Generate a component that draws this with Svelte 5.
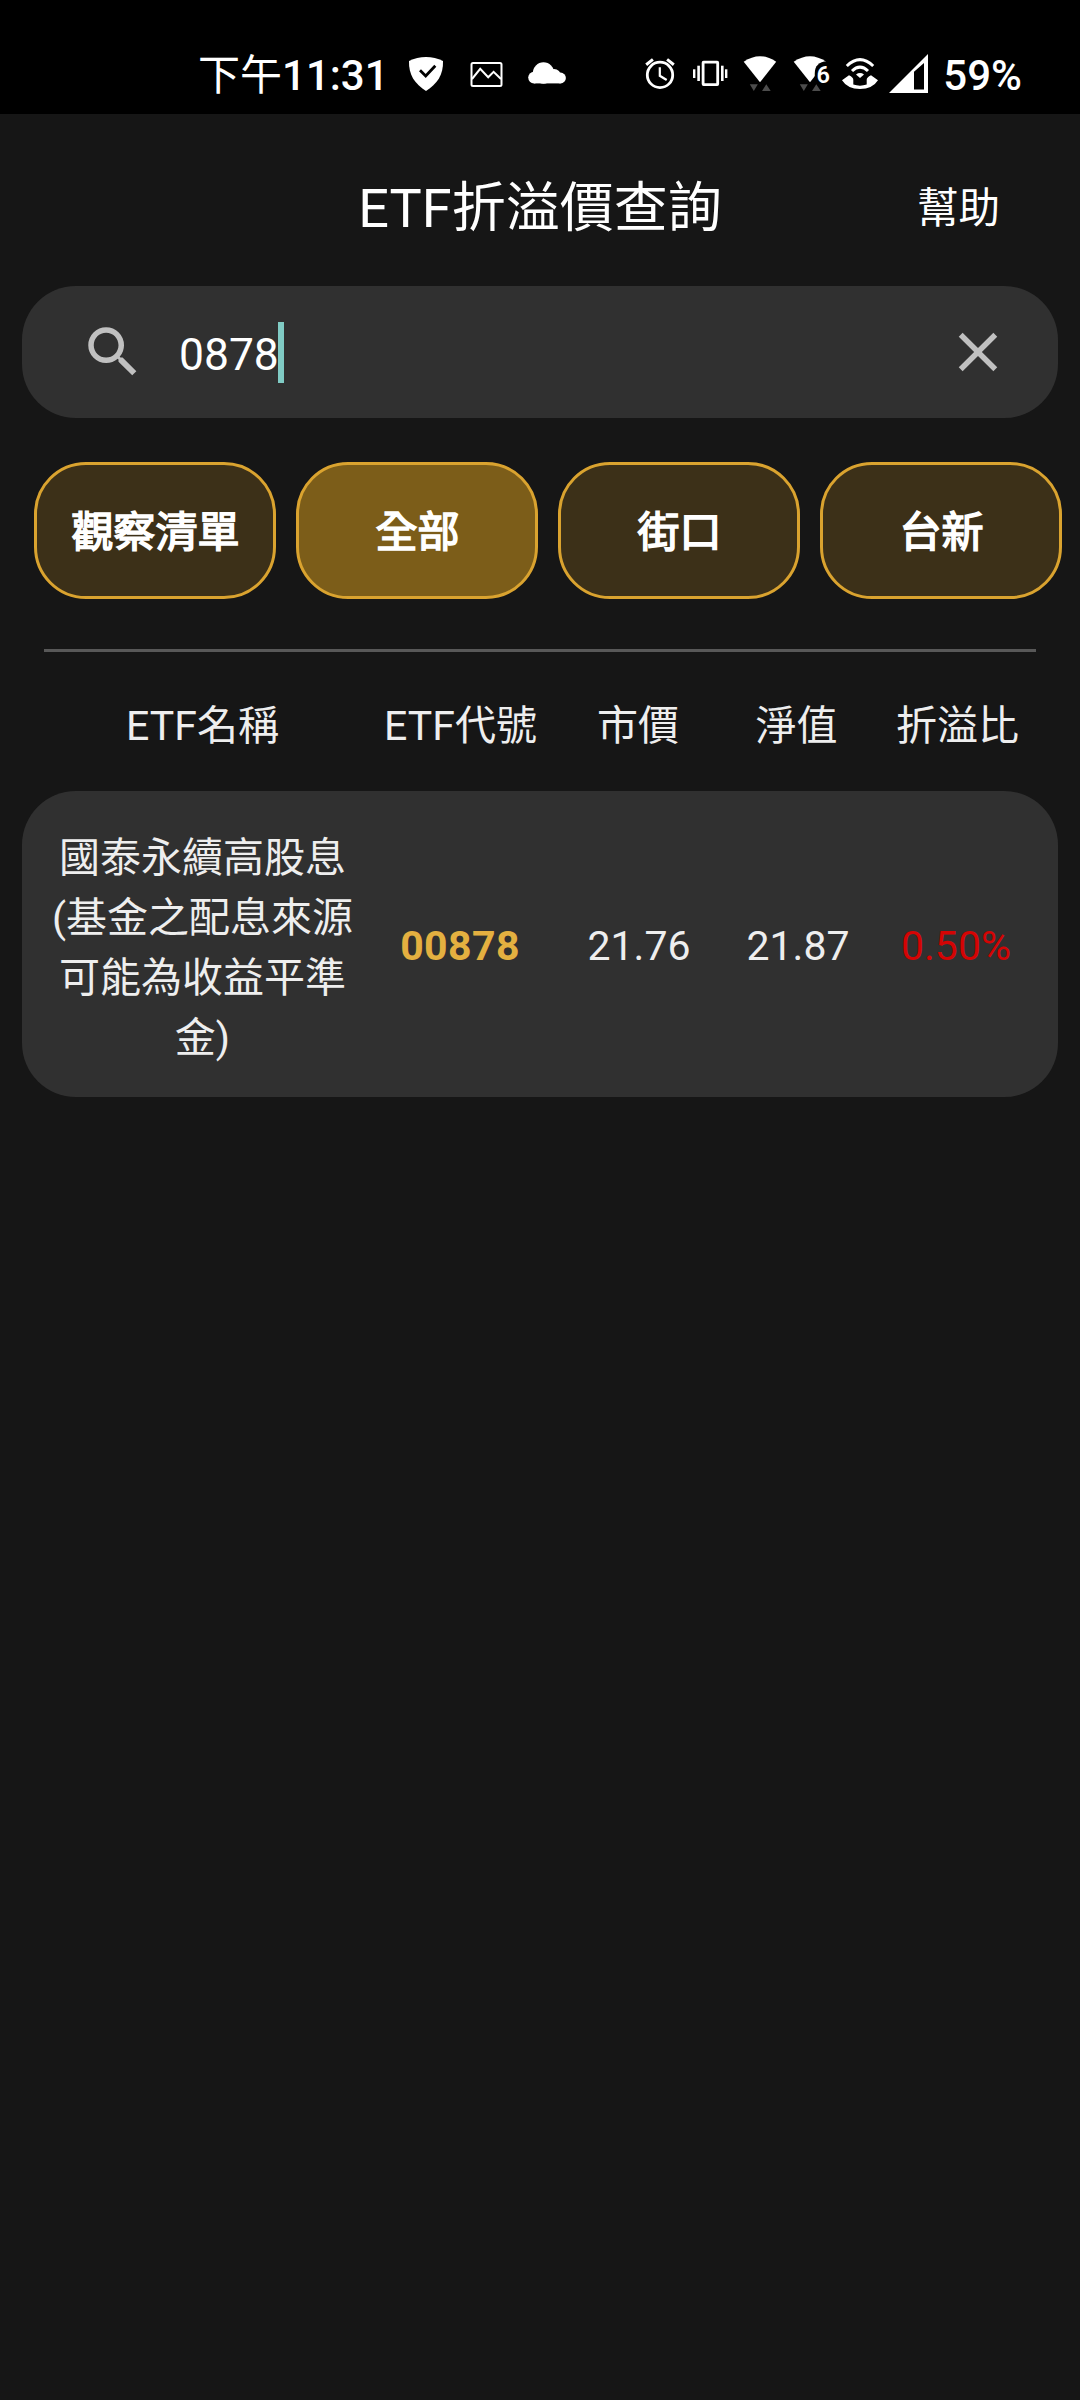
<script>
  let query  = $state('0878');
  let active = $state('全部');

  const filters = ['觀察清單', '全部', '街口', '台新'];
  const columns = ['ETF名稱', 'ETF代號', '市價', '淨值', '折溢比'];

  const etfs = [
    {
      name: '國泰永續高股息(基金之配息來源可能為收益平準金)',
      code: '00878',
      price: '21.76',
      nav: '21.87',
      ratio: '0.50%',
    },
  ];

  const results = $derived(etfs.filter((etf) => etf.code.includes(query)));
</script>

<div class="screen">
  <div class="status-bar">
    <div class="status-group left">
      <span class="clock"><span class="period">下午</span>11:31</span>
      <div class="status-icons notifications">
        <!-- shield -->
        <svg viewBox="0 0 40 40">
          <path d="M3 8Q11 4 20 4T37 8C37.5 22 31 31 20 38C9 31 2.5 22 3 8Z" fill="#fff" />
          <path d="M14 17.3L19.7 23L29.3 12.7" fill="none" stroke="#000" stroke-width="2.8" />
        </svg>
        <!-- picture -->
        <svg viewBox="0 0 40 40" fill="none" stroke="#fff" stroke-width="2">
          <rect x="5.5" y="10" width="30" height="23" rx="1.5" />
          <path d="M6 26L14.2 15.8L22.2 24.3L27.6 18.8L35 26" />
        </svg>
        <!-- cloud -->
        <svg viewBox="0 0 40 40" fill="#fff">
          <circle cx="16.5" cy="20" r="10.7" />
          <circle cx="7" cy="24.6" r="5.8" />
          <circle cx="27" cy="23" r="7" />
          <circle cx="33.5" cy="25" r="5.4" />
          <rect x="7" y="22" width="26.5" height="8.4" />
        </svg>
      </div>
    </div>

    <div class="status-group">
      <div class="status-icons">
        <!-- alarm -->
        <svg viewBox="0 0 40 40" fill="none" stroke="#fff">
          <circle cx="20" cy="21.9" r="12.7" stroke-width="2.8" />
          <path d="M19.8 14.3V22.8L26.7 27" stroke-width="2.2" />
          <path d="M6.2 11.7L12.9 6.4M27.1 6.4L33.8 11.7" stroke-width="3" />
        </svg>
        <!-- vibrate -->
        <svg viewBox="0 0 40 40" fill="#fff">
          <rect x="13.1" y="9.2" width="14.6" height="22.4" fill="none" stroke="#fff" stroke-width="2.8" rx="0.5" />
          <rect x="7.3" y="12.7" width="2.6" height="15.3" />
          <rect x="3" y="16.3" width="2.4" height="8.7" />
          <rect x="31" y="12.7" width="2.6" height="15.3" />
          <rect x="35" y="16.3" width="2.4" height="8.7" />
        </svg>
        <!-- wifi -->
        <svg viewBox="0 0 40 40">
          <path d="M3.7 8.7Q20 -2.4 36.2 8.7L20 29.3Z" fill="#fff" />
          <path d="M9.8 31.3H17.8L13.8 38ZM22 38H30.7L26.3 31.3Z" fill="#4c4c4c" />
        </svg>
        <!-- wifi 6 -->
        <svg viewBox="0 0 40 40">
          <path d="M3.7 8.7Q20 -2.4 36.2 8.7L20 29.3Z" fill="#fff" />
          <path d="M9.8 31.3H17.8L13.8 38ZM22 38H30.7L26.3 31.3Z" fill="#4c4c4c" />
          <path d="M24.8 24V20C24.8 13 29 8.5 37 8.2V24Z" fill="#000" />
          <text x="26.6" y="29.7" class="wifi-gen">6</text>
        </svg>
        <!-- wifi calling -->
        <svg viewBox="0 0 40 40">
          <path d="M6.8 13Q20 0.4 33.2 13M12 18Q20 10.4 28 18" fill="none" stroke="#fff" stroke-width="3" />
          <path d="M16 21.4Q20 18.6 24 21.4L20 25Z" fill="#fff" />
          <path d="M2 27.3L9 22.3Q13.3 24.5 13.3 26.8V31.5Q20 33.8 26.7 31.5V26.8Q26.7 24.5 31 22.3L38 27.3Q32.5 36 20 36T2 27.3Z" fill="#fff" />
        </svg>
        <!-- signal -->
        <svg viewBox="0 0 40 40">
          <path d="M-1 40L38 1V40ZM24 18.7V36.5H34V10Z" fill="#fff" fill-rule="evenodd" />
        </svg>
      </div>
      <span class="battery">59%</span>
    </div>
  </div>

  <header class="header">
    <span></span>
    <h1 class="title">ETF折溢價查詢</h1>
    <button class="help">幫助</button>
  </header>

  <div class="search">
    <svg class="search-icon" viewBox="0 0 24 24">
      <path d="M15.5 14h-.79l-.28-.27A6.47 6.47 0 0 0 16 9.5 6.5 6.5 0 1 0 9.5 16c1.61 0 3.09-.59 4.23-1.57l.27.28v.79l5 4.99L20.49 19l-4.99-5zm-6 0C7.01 14 5 11.99 5 9.5S7.01 5 9.5 5 14 7.01 14 9.5 11.99 14 9.5 14z" />
    </svg>
    <span class="query">{query}</span>
    <span class="caret"></span>
    <button class="clear" aria-label="清除" onclick={() => (query = '')}>
      <svg viewBox="0 0 24 24">
        <path d="M19 6.41L17.59 5 12 10.59 6.41 5 5 6.41 10.59 12 5 17.59 6.41 19 12 13.41 17.59 19 19 17.59 13.41 12z" />
      </svg>
    </button>
  </div>

  <div class="filters">
    {#each filters as filter}
      <button class="chip" class:active={filter === active} onclick={() => (active = filter)}>{filter}</button>
    {/each}
  </div>

  <div class="columns">
    {#each columns as column}
      <span>{column}</span>
    {/each}
  </div>

  {#each results as etf}
    <div class="card">
      <span class="name">{etf.name}</span>
      <span class="code">{etf.code}</span>
      <span>{etf.price}</span>
      <span>{etf.nav}</span>
      <span class="ratio">{etf.ratio}</span>
    </div>
  {/each}
</div>

<style>
  :global(body) {
    background: #161616;
  }

  .screen {
    width: 1080px;
    height: 2400px;
    overflow: hidden;
    background: #161616;
    color: #fff;
    font-family: Roboto, 'Noto Sans CJK TC', sans-serif;
    font-size: 41px;
  }

  button {
    padding: 0;
    border: none;
    background: none;
    color: inherit;
    font: inherit;
    cursor: pointer;
  }

  svg {
    display: block;
    flex: none;
  }

  .status-bar {
    display: flex;
    justify-content: space-between;
    box-sizing: border-box;
    height: 114px;
    padding: 46px 58px 0 198px;
    background: #000;
    font-size: 42px;
    font-weight: 500;
    line-height: 60px;
  }

  .status-group {
    display: flex;
    gap: 13px;
    height: 60px;
  }

  .status-group.left {
    gap: 17px;
  }

  .period {
    font-weight: 400;
  }

  .status-icons {
    display: flex;
    gap: 10px;
    padding-top: 7px;
  }

  .status-icons.notifications {
    gap: 20.5px;
  }

  .status-icons svg {
    width: 40px;
    height: 40px;
    overflow: visible;
  }

  .wifi-gen {
    fill: #fff;
    stroke: #000;
    stroke-width: 5px;
    paint-order: stroke;
    font-size: 23.5px;
    font-weight: 600;
  }

  .header {
    display: grid;
    grid-template-columns: 1fr auto 1fr;
    align-items: center;
    height: 172px;
    padding: 0 80px;
    box-sizing: border-box;
  }

  .title {
    margin: 0;
    padding-top: 17px;
    font-size: 54px;
    font-weight: 400;
    line-height: 80px;
  }

  .help {
    justify-self: end;
    padding-top: 17px;
    font-size: 41.5px;
    line-height: 60px;
  }

  .search {
    display: flex;
    align-items: center;
    box-sizing: border-box;
    height: 132px;
    margin: 0 22px;
    padding: 0 47px 0 58px;
    border-radius: 54px;
    background: #303030;
    font-size: 44.4px;
  }

  .search-icon,
  .clear svg {
    width: 66px;
    height: 66px;
    fill: #c0c0c0;
  }

  .query {
    margin-left: 33px;
    padding-top: 6px;
    line-height: 60px;
  }

  .caret {
    width: 6px;
    height: 61px;
    margin-left: -1px;
    background: #80cbc4;
  }

  .clear {
    margin-left: auto;
  }

  .filters {
    display: flex;
    gap: 20px;
    padding: 44px 18px 50px 34px;
  }

  /* regular weight thickened by a stroke, lighter than the real bold cut */
  .chip {
    box-sizing: border-box;
    width: 242px;
    height: 137px;
    padding: 0 0 5px 1px;
    border: 3px solid #daa32f;
    border-radius: 52px;
    background: #3c3018;
    font-size: 42px;
    -webkit-text-stroke: 1.6px #fff;
  }

  .chip.active {
    background: #7c5d19;
  }

  .columns,
  .card {
    display: grid;
    align-items: center;
    box-sizing: border-box;
    color: #eee;
    text-align: center;
    line-height: 60px;
  }

  .columns {
    grid-template-columns: 317px 199px 156px 161px 161px;
    height: 142px;
    margin: 0 44px;
    border-top: 3px solid #585858;
    padding-top: 9px;
  }

  .card {
    grid-template-columns: 317px 198px 160px 158px 158px;
    height: 306px;
    margin: 0 22px;
    padding: 3px 22px 0;
    border-radius: 54px;
    background: #303030;
  }

  .name {
    padding-top: 5px;
  }

  .code {
    color: #e4b040;
    font-weight: 700;
    letter-spacing: 0.4px;
  }

  .ratio {
    color: #d40404;
  }
</style>
